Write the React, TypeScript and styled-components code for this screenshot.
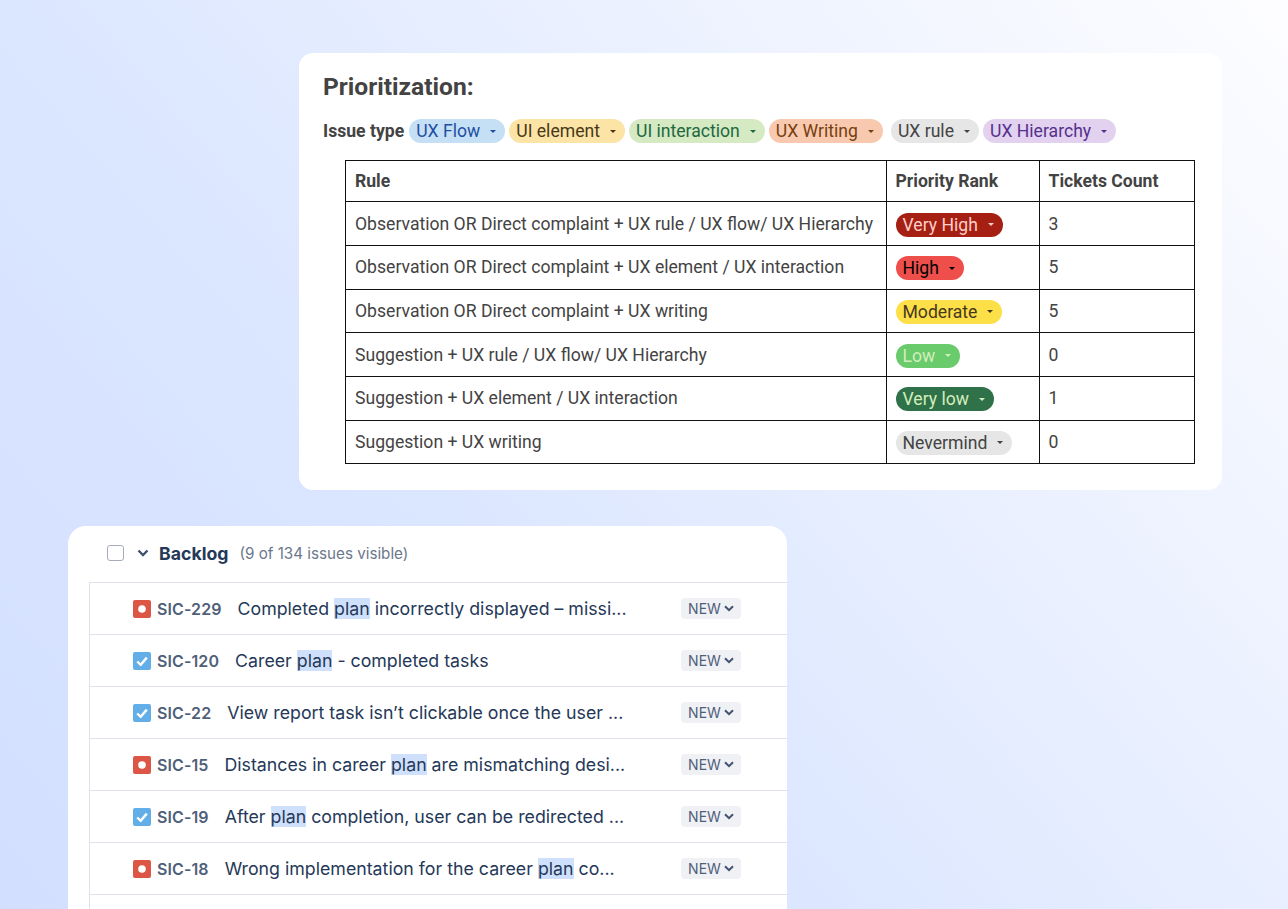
import React from "react";
import styled, { createGlobalStyle } from "styled-components";

const GlobalStyle = createGlobalStyle`
  html, body {
    margin: 0;
    padding: 0;
    height: 100%;
    overflow: hidden;
  }
`;

const Page = styled.div`
  width: 1288px;
  height: 909px;
  overflow: hidden;
  box-sizing: border-box;
  padding-top: 53px;
  background: linear-gradient(49deg, #d2dfff 0%, #dbe6ff 38%, #fdfdff 100%);
`;

const RulesCard = styled.section`
  width: 923px;
  height: 437px;
  margin-left: 299px;
  box-sizing: border-box;
  padding: 19px 27px 0 24px;
  background: #fff;
  border-radius: 14px;
  font-family: Roboto, "Liberation Sans", sans-serif;
  color: #434343;
`;

const Heading = styled.h2`
  margin: 0;
  font-size: 24.6px;
  line-height: 30px;
  font-weight: 700;
`;

const IssueRow = styled.div`
  display: flex;
  align-items: center;
  height: 24px;
  margin-top: 17px;
  gap: 4px;
  font-size: 17.6px;
`;

const IssueLabel = styled.strong`
  font-weight: 700;
  margin-right: 1px;
`;

const Chip = styled.span<{ $bg: string; $fg: string; $shift?: number }>`
  display: inline-flex;
  align-items: center;
  box-sizing: border-box;
  height: 24px;
  margin-left: ${({ $shift }) => $shift ?? 0}px;
  padding: 0 7px;
  border-radius: 12px;
  background: ${({ $bg }) => $bg};
  color: ${({ $fg }) => $fg};
  font-size: 17.6px;
  white-space: nowrap;
`;

const RankChip = styled(Chip)`
  vertical-align: middle;
  position: relative;
  top: 1px;
`;

const Caret = styled.i`
  display: inline-block;
  width: 0;
  height: 0;
  margin-left: 10px;
  margin-right: 2px;
  border-left: 3px solid transparent;
  border-right: 3px solid transparent;
  border-top: 3px solid currentColor;
`;

const RuleTable = styled.table`
  width: 849px;
  margin: 17px 0 0 22px;
  border-collapse: collapse;
  table-layout: fixed;
  font-size: 17.6px;
  color: #434343;

  th, td {
    border: 1.5px solid #111;
    padding: 0 9px;
    text-align: left;
    vertical-align: middle;
    white-space: nowrap;
  }

  th {
    height: 40.2px;
    font-weight: 700;
  }

  td {
    height: 42.7px;
  }
`;

const BacklogCard = styled.section`
  width: 719px;
  height: 420px;
  margin: 36px 0 0 68px;
  background: #fff;
  border-radius: 18px 18px 0 0;
  box-sizing: border-box;
  padding-left: 21px;
  font-family: Inter, "Liberation Sans", sans-serif;
  color: #253858;
`;

const BacklogHeader = styled.header`
  display: flex;
  align-items: center;
  height: 54px;
  margin-bottom: 2px;
  padding-left: 18px;
`;

const Checkbox = styled.span`
  width: 14.5px;
  height: 14.5px;
  border: 1.5px solid #a5adba;
  border-radius: 3px;
`;

const Chevron = styled.svg`
  width: 12px;
  height: 8px;
  margin-left: 13.5px;
`;

const BacklogTitle = styled.strong`
  margin-left: 10px;
  font-size: 17.7px;
  font-weight: 700;
  color: #253858;
`;

const BacklogCount = styled.span`
  margin-left: 11px;
  font-size: 15.2px;
  color: #6b778c;
`;

const IssueList = styled.ul`
  list-style: none;
  margin: 0;
  padding: 0;
  border-left: 1px solid #dfe1ec;
`;

const IssueItem = styled.li`
  display: flex;
  align-items: center;
  height: 52px;
  box-sizing: border-box;
  padding-left: 43px;
  border-top: 1px solid #dfe1ec;
`;

const IssueKey = styled.span`
  margin-left: 6px;
  font-size: 16px;
  font-weight: 600;
  letter-spacing: 0.1px;
  color: #505f79;
`;

const IssueTitle = styled.span`
  flex: 1;
  margin-left: 16px;
  font-size: 17.75px;
  color: #253858;
  white-space: nowrap;
`;

const Mark = styled.mark`
  background: #cfe0fc;
  color: inherit;
`;

const StatusTag = styled.span`
  display: inline-flex;
  align-items: center;
  justify-content: center;
  gap: 3px;
  width: 60px;
  height: 21px;
  margin-right: 46px;
  border-radius: 4px;
  background: #f0f1f5;
  color: #505f79;
  font-size: 14px;
`;

const TagChevron = styled.svg`
  width: 10px;
  height: 7px;
`;

type IssueKind = "bug" | "task";

const IssueIcon = ({ kind }: { kind: IssueKind }) => (
  <svg width="18" height="18" viewBox="0 0 18 18">
    <rect width="18" height="18" rx="2" fill={kind === "bug" ? "#dc5646" : "#62aee8"} />
    {kind === "bug" ? (
      <circle cx="9" cy="9" r="3.8" fill="#fff" />
    ) : (
      <path d="M4.2 9.5l3.5 3.3 6.1-7.2" fill="none" stroke="#fff" strokeWidth="2.4" />
    )}
  </svg>
);

const issueTypes = [
  { label: "UX Flow", bg: "#c5dff5", fg: "#1f4fa3", shift: 0 },
  { label: "UI element", bg: "#fce4a6", fg: "#473819", shift: 0 },
  { label: "UI interaction", bg: "#d5e9c3", fg: "#21683f", shift: 0 },
  { label: "UX Writing", bg: "#f8c9ae", fg: "#753f10", shift: 0 },
  { label: "UX rule", bg: "#e6e6e6", fg: "#434343", shift: 4 },
  { label: "UX Hierarchy", bg: "#e2d2ef", fg: "#55308d", shift: 0 },
];

const rules = [
  { rule: "Observation OR Direct complaint + UX rule / UX flow/ UX Hierarchy", rank: "Very High", bg: "#a61f13", fg: "#ffcfc9", count: 3 },
  { rule: "Observation OR Direct complaint + UX element / UX interaction", rank: "High", bg: "#ef4f4a", fg: "#000", count: 5 },
  { rule: "Observation OR Direct complaint + UX writing", rank: "Moderate", bg: "#fde047", fg: "#473821", count: 5 },
  { rule: "Suggestion + UX rule / UX flow/ UX Hierarchy", rank: "Low", bg: "#69cb6c", fg: "#d4edbc", count: 0 },
  { rule: "Suggestion + UX element / UX interaction", rank: "Very low", bg: "#2f7148", fg: "#d4edbc", count: 1 },
  { rule: "Suggestion + UX writing", rank: "Nevermind", bg: "#e6e6e6", fg: "#434343", count: 0 },
];

const issues: { kind: IssueKind; id: string; before: string; after: string }[] = [
  { kind: "bug", id: "SIC-229", before: "Completed ", after: " incorrectly displayed – missi..." },
  { kind: "task", id: "SIC-120", before: "Career ", after: " - completed tasks" },
  { kind: "task", id: "SIC-22", before: "View report task isn’t clickable once the user ...", after: "" },
  { kind: "bug", id: "SIC-15", before: "Distances in career ", after: " are mismatching desi..." },
  { kind: "task", id: "SIC-19", before: "After ", after: " completion, user can be redirected ..." },
  { kind: "bug", id: "SIC-18", before: "Wrong implementation for the career ", after: " co..." },
];

const App: React.FC = () => (
  <Page>
    <GlobalStyle />
    <RulesCard>
      <Heading>Prioritization:</Heading>
      <IssueRow>
        <IssueLabel>Issue type</IssueLabel>
        {issueTypes.map((t) => (
          <Chip key={t.label} $bg={t.bg} $fg={t.fg} $shift={t.shift}>
            {t.label}
            <Caret />
          </Chip>
        ))}
      </IssueRow>
      <RuleTable>
        <colgroup>
          <col style={{ width: 540.5 }} />
          <col style={{ width: 153 }} />
          <col style={{ width: 155.5 }} />
        </colgroup>
        <thead>
          <tr>
            <th>Rule</th>
            <th>Priority Rank</th>
            <th>Tickets Count</th>
          </tr>
        </thead>
        <tbody>
          {rules.map((r) => (
            <tr key={r.rule}>
              <td>{r.rule}</td>
              <td>
                <RankChip $bg={r.bg} $fg={r.fg}>
                  {r.rank}
                  <Caret />
                </RankChip>
              </td>
              <td>{r.count}</td>
            </tr>
          ))}
        </tbody>
      </RuleTable>
    </RulesCard>
    <BacklogCard>
      <BacklogHeader>
        <Checkbox />
        <Chevron viewBox="0 0 12 8">
          <path d="M1.5 1.5L6 6l4.5-4.5" fill="none" stroke="#42526e" strokeWidth="2.4" />
        </Chevron>
        <BacklogTitle>Backlog</BacklogTitle>
        <BacklogCount>(9 of 134 issues visible)</BacklogCount>
      </BacklogHeader>
      <IssueList>
        {issues.map((issue) => (
          <IssueItem key={issue.id}>
            <IssueIcon kind={issue.kind} />
            <IssueKey>{issue.id}</IssueKey>
            <IssueTitle>
              {issue.before}
              {issue.after && <Mark>plan</Mark>}
              {issue.after}
            </IssueTitle>
            <StatusTag>
              NEW
              <TagChevron viewBox="0 0 10 7">
                <path d="M1 1.2l4 4 4-4" fill="none" stroke="#42526e" strokeWidth="2" />
              </TagChevron>
            </StatusTag>
          </IssueItem>
        ))}
        <IssueItem />
      </IssueList>
    </BacklogCard>
  </Page>
);

export default App;
